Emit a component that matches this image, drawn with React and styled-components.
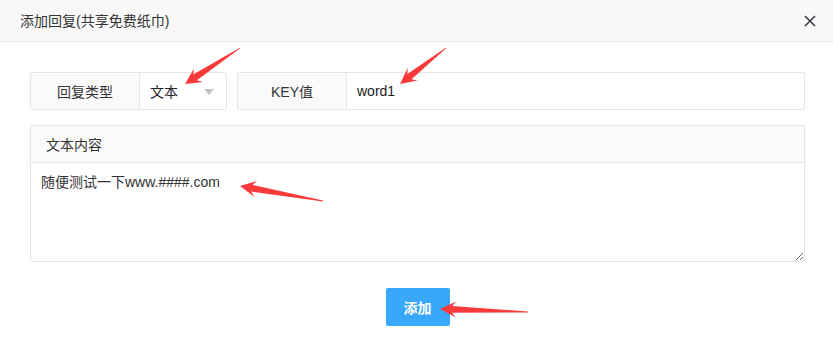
import React from "react";
import styled, { createGlobalStyle } from "styled-components";

const Global = createGlobalStyle`
  html, body { margin: 0; padding: 0; background: #fff; }
  body { font-family: "Liberation Sans", "Noto Sans CJK SC", sans-serif; font-size: 14px; color: #333; }
  * { box-sizing: border-box; }
`;

const Page = styled.div`
  position: relative;
  width: 833px;
  height: 349px;
  overflow: hidden;
  background: #fff;
`;

const Header = styled.div`
  height: 42px;
  background: #f8f8f8;
  border-bottom: 1px solid #ebebeb;
  padding: 0 16px 0 20px;
  display: flex;
  align-items: center;
  justify-content: space-between;
`;

const Title = styled.div`
  font-size: 14px;
  color: #333;
  line-height: 20px;
`;

const Close = styled.div`
  width: 14px;
  height: 14px;
  display: flex;
  align-items: center;
  justify-content: center;
`;

const Body = styled.div`
  padding: 30px 28px 0 30px;
`;

const Row = styled.div`
  display: flex;
  gap: 10px;
`;

const Field = styled.div`
  display: flex;
  height: 38px;
  border: 1px solid #e6e6e6;
  border-radius: 2px;
  width: ${(p) => p.$width || "auto"};
  flex: ${(p) => (p.$grow ? "1" : "none")};
`;

const Label = styled.div`
  width: ${(p) => p.$width}px;
  background: #fafafa;
  border-right: 1px solid #e6e6e6;
  display: flex;
  align-items: center;
  justify-content: center;
  color: #333;
  font-size: 14px;
`;

const Value = styled.div`
  flex: 1;
  display: flex;
  align-items: center;
  justify-content: space-between;
  padding: 0 12px 0 10px;
  color: #222;
  font-size: 14px;
  background: #fff;
`;

const Caret = styled.span`
  width: 0;
  height: 0;
  border-left: 5px solid transparent;
  border-right: 5px solid transparent;
  border-top: 6px solid #c2c2c2;
  margin-top: 1px;
`;

const Card = styled.div`
  margin-top: 15px;
  border: 1px solid #e6e6e6;
  border-radius: 2px;
  display: flex;
  flex-direction: column;
`;

const CardHeader = styled.div`
  height: 37px;
  background: #fafafa;
  border-bottom: 1px solid #e6e6e6;
  padding-left: 15px;
  display: flex;
  align-items: center;
  color: #333;
  font-size: 14px;
`;

const TextArea = styled.textarea`
  display: block;
  width: 100%;
  height: 98px;
  border: none;
  outline: none;
  resize: vertical;
  padding: 9px 10px;
  font-family: "Liberation Sans", "Noto Sans CJK SC", sans-serif;
  font-size: 14px;
  line-height: 20px;
  color: #333;
  background: #fff;
`;

const ButtonRow = styled.div`
  display: flex;
  justify-content: center;
  margin-top: 26px;
`;

const Button = styled.button`
  width: 64px;
  height: 38px;
  border: none;
  border-radius: 2px;
  background: #39a8fb;
  color: #fff;
  font-family: "Noto Sans CJK SC", sans-serif;
  font-size: 14px;
  font-weight: 700;
  cursor: pointer;
`;

const Overlay = styled.svg`
  position: absolute;
  left: 0;
  top: 0;
  pointer-events: none;
`;

function arrowPoints([tx, ty], [px, py]) {
  const dx = px - tx;
  const dy = py - ty;
  const len = Math.hypot(dx, dy);
  const ux = dx / len;
  const uy = dy / len;
  const nx = -uy;
  const ny = ux;
  const h = 16;
  const w = 8;
  const s = 3.4;
  const bx = px - ux * h;
  const by = py - uy * h;
  const bx2 = px - ux * (h - 4);
  const by2 = py - uy * (h - 4);
  const pts = [
    [tx + nx * 0.4, ty + ny * 0.4],
    [bx2 + nx * s, by2 + ny * s],
    [bx + nx * w, by + ny * w],
    [px, py],
    [bx - nx * w, by - ny * w],
    [bx2 - nx * s, by2 - ny * s],
    [tx - nx * 0.4, ty - ny * 0.4],
  ];
  return pts.map((p) => p.map((v) => v.toFixed(1)).join(",")).join(" ");
}

const arrows = [
  [[240, 48], [185, 84]],
  [[446, 48], [400, 84]],
  [[323, 201], [240, 186]],
  [[528, 312], [440, 309]],
];

export default function App() {
  return (
    <>
      <Global />
      <Page>
        <Header>
          <Title>添加回复(共享免费纸巾)</Title>
          <Close>
            <svg width="12" height="12" viewBox="0 0 12 12">
              <path d="M1 1 L11 11 M11 1 L1 11" stroke="#3a3a44" strokeWidth="1.6" />
            </svg>
          </Close>
        </Header>
        <Body>
          <Row>
            <Field $width="197px">
              <Label $width={109}>回复类型</Label>
              <Value>
                <span>文本</span>
                <Caret />
              </Value>
            </Field>
            <Field $grow>
              <Label $width={109}>KEY值</Label>
              <Value>word1</Value>
            </Field>
          </Row>
          <Card>
            <CardHeader>文本内容</CardHeader>
            <TextArea defaultValue="随便测试一下www.####.com" />
          </Card>
          <ButtonRow>
            <Button>添加</Button>
          </ButtonRow>
        </Body>
        <Overlay width="833" height="349" viewBox="0 0 833 349">
          {arrows.map(([t, p], i) => (
            <polygon key={i} points={arrowPoints(t, p)} fill="#fa3a3a" />
          ))}
        </Overlay>
      </Page>
    </>
  );
}
